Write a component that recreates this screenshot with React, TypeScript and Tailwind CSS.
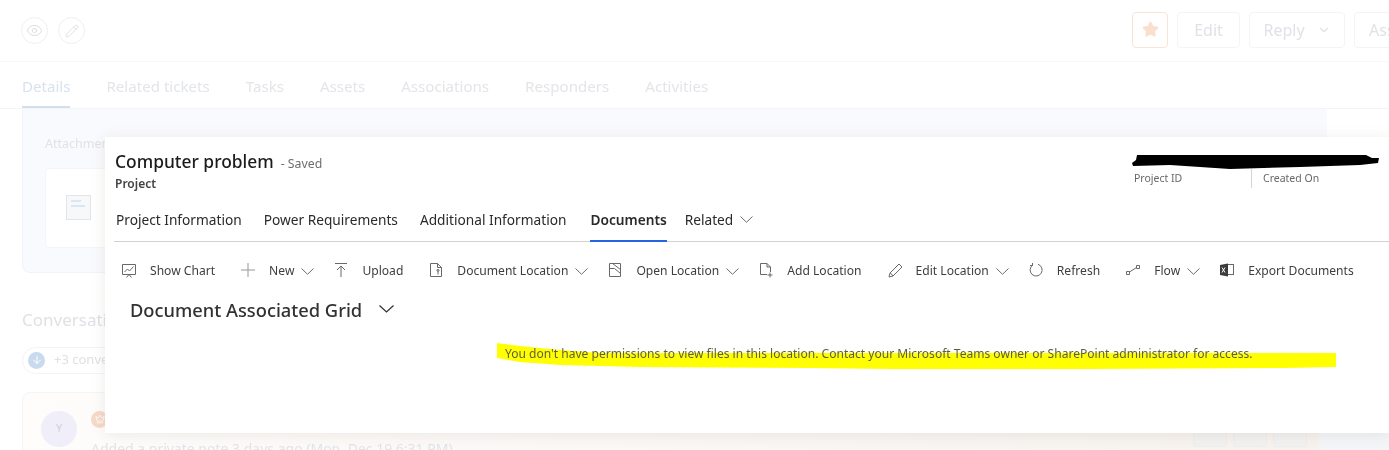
import type { ReactNode } from 'react'
import { ChevronDown, Eye, Pencil, Star, ArrowDown, Crown } from 'lucide-react'

const sans = { fontFamily: '"Noto Sans", sans-serif' }

const backTabs = ['Related tickets', 'Tasks', 'Assets', 'Associations', 'Responders', 'Activities']
const formTabs = ['Project Information', 'Power Requirements', 'Additional Information']

// fluent style command bar icons, thin strokes
function Glyph({ children }: { children: ReactNode }) {
  return (
    <svg width="14" height="16" viewBox="0 0 14 16" fill="none" stroke="#6b6967" strokeWidth="1" className="shrink-0 -mt-[3px]">
      {children}
    </svg>
  )
}

function Chevron() {
  return (
    <svg width="13" height="7" viewBox="0 0 13 7" fill="none" stroke="#6f6d6b" strokeWidth="1" className="shrink-0">
      <path d="M0.500 0.500L6.500 6.300L12.500 0.500" />
    </svg>
  )
}

function ToolItem({ icon, label, menu }: { icon: ReactNode; label: string; menu?: boolean }) {
  return (
    <div className={`flex items-center ${menu ? '' : 'pr-[6px]'}`}>
      <span className="w-[14px] flex justify-center">{icon}</span>
      <span className={`ml-[14px] text-[12.100px] text-[#3f3e3d] whitespace-nowrap ${menu ? 'mr-[7px]' : ''}`}>{label}</span>
      {menu && <Chevron />}
    </div>
  )
}

function BackButton({ children, className }: { children: ReactNode; className: string }) {
  return (
    <div className={`h-9 flex items-center justify-center rounded-[4px] border border-[#f3f4f6] text-[16px] text-[#dfe2e7] ${className}`}>
      {children}
    </div>
  )
}

export default function App() {
  return (
    <div className="relative w-[1389px] h-[450px] overflow-hidden bg-white" style={sans}>
      {/* page behind the dialog */}
      <div className="h-[62px] flex items-center justify-between pl-[21px] border-b border-[#f8f8f9]">
        <div className="flex gap-[10px]">
          <div className="w-[27px] h-[27px] rounded-full border border-[#eeeff1] flex items-center justify-center">
            <Eye size={17} strokeWidth={1.2} className="text-[#d4d6da]" />
          </div>
          <div className="w-[27px] h-[27px] rounded-full border border-[#eeeff1] flex items-center justify-center">
            <Pencil size={14} strokeWidth={1.2} className="text-[#d4d6da]" />
          </div>
        </div>
        <div className="flex gap-[9px] w-[257px] overflow-hidden shrink-0 -mt-[2px]">
          <BackButton className="w-9 shrink-0 border-[#fbe3d3]">
            <Star size={17} fill="#fbdfcd" stroke="#fbdfcd" />
          </BackButton>
          <BackButton className="w-[63px] shrink-0">Edit</BackButton>
          <BackButton className="w-[96px] shrink-0 gap-3">
            Reply
            <ChevronDown size={14} />
          </BackButton>
          <BackButton className="w-[60px] shrink-0 justify-start pl-[14px]">Assign</BackButton>
        </div>
      </div>
      <div className="h-[47px] flex items-center gap-9 pl-[22px] pt-[3px] border-b border-[#f3f4f7] text-[15.100px] text-[#e3e5e9]">
        <div className="relative h-full flex items-center text-[#d8e2ef]">
          Details
          <div className="absolute left-0 right-0 bottom-0 h-[2px] bg-[#d3dfee]" />
        </div>
        {backTabs.map((t) => (
          <span key={t}>{t}</span>
        ))}
      </div>
      <div className="h-[342px] bg-white pl-[22px]">
        <div className="h-[164px] w-[1305px] rounded-bl-lg border-l border-b border-[#f1f3f8] bg-[#f9fafd] pl-[22px] pt-[26px]">
          <div className="text-[12.500px] text-[#dfe2e7]">Attachments</div>
          <div className="mt-[14px] h-[80px] w-[200px] rounded border border-[#f4f5f8] bg-white flex items-center pl-[20px]">
            <div className="w-[25px] h-[25px] border border-[#e3e4e7] bg-[#f7f8fa] p-[4px]">
              <div className="h-[2px] w-[10px] bg-[#dbe6f5] mb-[3px]" />
              <div className="h-[2px] w-[14px] bg-[#dbe6f5]" />
            </div>
          </div>
        </div>
        <div className="mt-[34px] text-[17px] text-[#dfe1e5]">Conversations</div>
        <div className="mt-[14px] h-[27px] w-[200px] rounded-full border border-[#f2f3f5] flex items-center pl-[5px] text-[13px] text-[#dfe1e5]">
          <span className="w-[17px] h-[17px] rounded-full bg-[#c9daee] flex items-center justify-center">
            <ArrowDown size={12} className="text-white" />
          </span>
          <span className="ml-[9px]">+3 conversations</span>
        </div>
        <div className="mt-[18px] flex">
          <div className="h-[90px] w-[1298px] rounded-tl-lg border border-[#f5f5f6] bg-gradient-to-r from-[#fefdfc] to-[#f7f2ee] flex pl-[18px] pt-[18px]">
            <div className="w-[36px] h-[36px] rounded-full bg-[#f0eef9] flex items-center justify-center text-[11px] text-[#cfcbe6]">Y</div>
            <div className="ml-[14px]">
              <div className="w-[17px] h-[17px] rounded-full bg-[#f6d9c8] flex items-center justify-center">
                <Crown size={10} className="text-white" />
              </div>
              <div className="mt-[10px] text-[14px] text-[#e3e4e7] whitespace-nowrap">Added a private note 3 days ago (Mon, Dec 19 6:31 PM)</div>
            </div>
            <div className="ml-auto mr-[12px] mt-[6px] flex gap-[6px]">
              <div className="w-[34px] h-[30px] rounded border border-[#eeeeee] bg-[#f2f2f2]" />
              <div className="w-[34px] h-[30px] rounded border border-[#eeeeee] bg-[#f2f2f2]" />
              <div className="w-[34px] h-[30px] rounded border border-[#eeeeee] bg-[#f2f2f2]" />
            </div>
          </div>
          <div className="flex-1 h-[90px] bg-[#f3f5f8]" />
        </div>
      </div>

      {/* dialog */}
      <div className="absolute left-[105px] top-[137px] w-[1284px] h-[296px] bg-white shadow-[0_2px_14px_rgba(90,70,50,0.1)]">
        <div className="flex justify-between items-start pl-[10px] pt-[13px]">
          <div>
            <div className="flex items-baseline">
              <span className="text-[17.400px] leading-[22px] font-medium text-[#1d1c1b]">Computer problem</span>
              <span className="ml-[7px] text-[12.300px] text-[#6f6d6b]">- Saved</span>
            </div>
            <div className="mt-[2px] text-[12px] font-semibold text-[#444342]">Project</div>
          </div>
          <div className="flex w-[255px] mt-[19px] text-[10.500px] text-[#6a6866]">
            <div className="w-[117px] leading-[18px]">Project ID</div>
            <div className="pl-[11px] h-[19px] leading-[18px] border-l border-[#d6d5d3]">Created On</div>
          </div>
        </div>
        <div className="ml-[9px] mt-[13px] h-[36px] flex items-start gap-[22px] pl-[2px] border-b border-[#d3d2d0] text-[13.700px] text-[#2b2a29]">
          {formTabs.map((t) => (
            <span key={t} className="leading-[27px]">{t}</span>
          ))}
          <span className="relative ml-[2px] h-[36px] leading-[27px] font-semibold">
            Documents
            <span className="absolute left-0 right-0 bottom-0 h-[2px] bg-[#2266e3]" />
          </span>
          <span className="-ml-[4px] flex items-center leading-[27px]">
            Related
            <span className="ml-[7px]"><Chevron /></span>
          </span>
        </div>
        <div className="flex items-center gap-5 pl-[17px] mt-[17px] h-[24px]">
          <ToolItem
            label="Show Chart"
            icon={
              <Glyph>
                <path d="M0.500 2.500h13v10h-13z" />
                <path d="M2.500 10l3-3 2 2 4-4.500M7 12.500l-2.500 3M7 12.500l2.500 3" />
              </Glyph>
            }
          />
          <ToolItem
            menu
            label="New"
            icon={
              <Glyph>
                <path d="M0 8h14M7 1v14" stroke="#9a9896" />
              </Glyph>
            }
          />
          <ToolItem
            label="Upload"
            icon={
              <Glyph>
                <path d="M1 1.500h12M7 15V4M3 8l4-4 4 4" />
              </Glyph>
            }
          />
          <ToolItem
            menu
            label="Document Location"
            icon={
              <Glyph>
                <path d="M8.500 1.500h-7v13h11V5.500l-4-4zM8.500 1.500v4h4" />
                <path d="M9 7.500a1 1 0 1 0 .01 0M9 9.500v3" />
              </Glyph>
            }
          />
          <ToolItem
            menu
            label="Open Location"
            icon={
              <Glyph>
                <path d="M1.500 1.500h11v13h-11zM1.500 6.500h5l6 5M4.500 1.500l8 6" />
              </Glyph>
            }
          />
          <ToolItem
            label="Add Location"
            icon={
              <Glyph>
                <path d="M8 1.500H1.500v11H8M8 1.500l3.500 3.500v5M8 1.500V5h3.500M8.500 13h5M11 10.500v5" />
              </Glyph>
            }
          />
          <ToolItem
            menu
            label="Edit Location"
            icon={
              <Glyph>
                <path d="M1 15l1-4L11 2l3 3-9 9-4 1zM2.500 11l2.500 3" />
              </Glyph>
            }
          />
          <ToolItem
            label="Refresh"
            icon={
              <Glyph>
                <path d="M3.800 3A6 6 0 1 0 9 2.300M3.500 1v2.500H1" />
              </Glyph>
            }
          />
          <ToolItem
            menu
            label="Flow"
            icon={
              <Glyph>
                <path d="M0.500 9.500h3v3h-3zM10.500 3.500h3v3h-3zM3.500 10l7-4.500" />
              </Glyph>
            }
          />
          <ToolItem
            label="Export Documents"
            icon={
              <svg width="14" height="14" viewBox="0 0 14 14" className="shrink-0 -mt-[2px]">
                <rect x="5.500" y="1.500" width="8" height="10" fill="none" stroke="#6b6967" />
                <path d="M0 2l8-1.500v13L0 12z" fill="#3c3b3a" />
                <path d="M2 4.500l3 5M5 4.500l-3 5" stroke="#fff" />
              </svg>
            }
          />
        </div>
        <div className="flex items-center pl-[25px] mt-[12px] h-[28px]">
          <span className="text-[18.300px] font-medium text-[#323130]">Document Associated Grid</span>
          <span className="ml-[17px]">
            <svg width="15" height="8" viewBox="0 0 15 8" fill="none" stroke="#323130" strokeWidth="1.200">
              <path d="M0.500 0.500L7.500 7L14.500 0.500" />
            </svg>
          </span>
        </div>
        <div className="relative z-10 ml-[400px] mt-[23px] text-[12.050px] leading-[16px] text-[#5f5e3c] whitespace-nowrap">
          You don't have permissions to view files in this location. Contact your Microsoft Teams owner or SharePoint administrator for access.
        </div>
      </div>

      {/* hand drawn marks on top of the screenshot */}
      <svg className="absolute left-0 top-0 pointer-events-none" width="1389" height="450">
        <path
          d="M497 343L520 346L560 350L600 353L1336 353L1336 367L1285 368L1090 369L890 369L810 368L640 367L560 365L520 362L497 358Z"
          fill="#ffff00"
          style={{ mixBlendMode: 'multiply' }}
        />
        <path
          d="M1137 155L1366 155L1372 158L1379 158L1378 163L1360 165L1300 167L1230 169L1170 165L1133 166L1132 163L1136 160Z"
          fill="#000"
        />
      </svg>
    </div>
  )
}
